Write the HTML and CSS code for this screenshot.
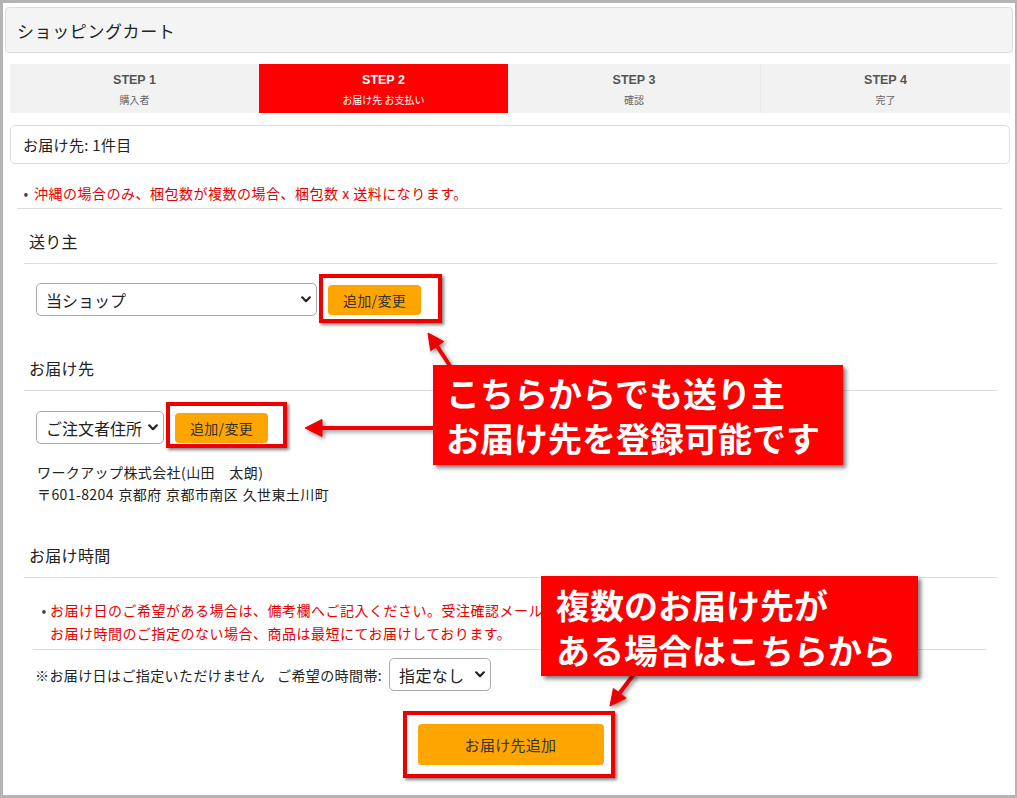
FILE: index.html
```html
<!DOCTYPE html>
<html lang="ja">
<head>
<meta charset="utf-8">
<title>ショッピングカート</title>
<link rel="stylesheet" href="styles.css">
</head>
<body>
<div class="page">
  <div class="frame">
    <div class="cart-head">ショッピングカート</div>

    <div class="steps">
      <div class="step"><div class="step-no">STEP 1</div><div class="step-name">購入者</div></div>
      <div class="step active"><div class="step-no">STEP 2</div><div class="step-name">お届け先 お支払い</div></div>
      <div class="step"><div class="step-no">STEP 3</div><div class="step-name">確認</div></div>
      <div class="step sep"><div class="step-no">STEP 4</div><div class="step-name">完了</div></div>
    </div>

    <div class="count-box">お届け先: 1件目</div>

    <ul class="note note-top">
      <li><span>沖縄の場合のみ、梱包数が複数の場合、梱包数 x 送料になります。</span></li>
    </ul>

    <section class="sec">
      <h2 class="sec-title">送り主</h2>
      <div class="row row-sender">
        <div class="select w-sender"><span>当ショップ</span><svg class="chev" width="10" height="7" viewBox="0 0 10 7"><path d="M1.2 1.3 L5 5.2 L8.8 1.3" fill="none" stroke="#222" stroke-width="2.2" stroke-linecap="round" stroke-linejoin="round"/></svg></div>
        <button class="btn-sm">追加/変更</button>
      </div>

      <h2 class="sec-title t-dest">お届け先</h2>
      <div class="row row-dest">
        <div class="select w-dest"><span>ご注文者住所</span><svg class="chev" width="10" height="7" viewBox="0 0 10 7"><path d="M1.2 1.3 L5 5.2 L8.8 1.3" fill="none" stroke="#222" stroke-width="2.2" stroke-linecap="round" stroke-linejoin="round"/></svg></div>
        <button class="btn-sm">追加/変更</button>
      </div>
      <div class="address">
        <div>ワークアップ株式会社(山田　太朗)</div>
        <div>〒601-8204 京都府 京都市南区 久世東土川町</div>
      </div>

      <h2 class="sec-title t-time">お届け時間</h2>
      <div class="time-body">
        <ul class="note note-time">
          <li><span>お届け日のご希望がある場合は、備考欄へご記入ください。受注確認メール<br>お届け時間のご指定のない場合、商品は最短にてお届けしております。</span></li>
        </ul>
        <div class="row row-time">
          <span>※お届け日はご指定いただけません</span>
          <span class="lbl">ご希望の時間帯:</span>
          <div class="select w-time"><span>指定なし</span><svg class="chev" width="10" height="7" viewBox="0 0 10 7"><path d="M1.2 1.3 L5 5.2 L8.8 1.3" fill="none" stroke="#222" stroke-width="2.2" stroke-linecap="round" stroke-linejoin="round"/></svg></div>
        </div>
      </div>
      <div class="add-wrap"><button class="btn-add">お届け先追加</button></div>
    </section>
  </div>

  <svg class="arrows" width="1017" height="798" viewBox="0 0 1017 798">
    <g fill="#ee0000" stroke="#ee0000">
      <line x1="452" y1="369" x2="437" y2="346" stroke-width="4"/>
      <polygon points="428,333 443.7,341.5 430.7,350.7" stroke-width="1"/>
      <line x1="440" y1="428" x2="319" y2="428" stroke-width="4"/>
      <polygon points="305,428 322,419.5 322,436.5" stroke-width="1"/>
      <line x1="634" y1="674" x2="619" y2="694" stroke-width="4"/>
      <polygon points="610,706 626.1,698.2 613.4,688.4" stroke-width="1"/>
    </g>
  </svg>

  <div class="mark m1"></div>
  <div class="mark m2"></div>
  <div class="mark m3"></div>

  <div class="callout c1">こちらからでも送り主<br>お届け先を登録可能です</div>
  <div class="callout c2">複数のお届け先が<br>ある場合はこちらから</div>
</div>
</body>
</html>
```

FILE: styles.css
```css
* { box-sizing: border-box; }

html, body {
  margin: 0;
  padding: 0;
  background: #fff;
}

body {
  font-family: "Noto Sans CJK JP", "Liberation Sans", sans-serif;
  color: #222;
}

.page {
  position: relative;
  width: 1017px;
  height: 798px;
  overflow: hidden;
}

.frame {
  height: 798px;
  border-style: solid;
  border-color: #b4b4b4;
  border-width: 3px 2px 3px 3px;
  padding: 4px 2px 0 2px;
  background: #fff;
}

.cart-head {
  height: 46px;
  border: 1px solid #dcdcdc;
  border-radius: 4px;
  background: #f4f4f4;
  padding-left: 11px;
  display: flex;
  align-items: center;
  font-size: 17px;
  letter-spacing: 0.6px;
  color: #222;
}

.steps {
  margin: 11px 3px 0 5px;
  height: 49px;
  display: grid;
  grid-template-columns: 249px 249px 252px 1fr;
  background: #f2f2f2;
}

.step {
  text-align: center;
  padding-top: 8px;
  color: #555;
}

.step.sep { border-left: 1px solid #e9e9e9; }

.step.active {
  background: #ff0000;
  color: #fff;
}

.step-no {
  font-family: "Liberation Sans", "Noto Sans CJK JP", sans-serif;
  font-weight: 700;
  font-size: 12.5px;
  line-height: 16px;
}

.step-name {
  font-size: 10px;
  line-height: 16px;
  margin-top: 4px;
  color: #666;
}

.step.active .step-name { color: #fff; }

.count-box {
  margin: 12px 3px 0 5px;
  height: 39px;
  border: 1px solid #dcdcdc;
  border-radius: 5px;
  padding-left: 12px;
  display: flex;
  align-items: center;
  font-size: 15px;
  letter-spacing: 0.3px;
  color: #222;
}

.note {
  list-style: none;
  margin: 0;
  padding: 0;
  color: #e80000;
  font-size: 14px;
  letter-spacing: 0.5px;
}

.note li {
  display: flex;
}

.note li::before {
  content: "•";
  color: #444;
  flex: none;
  text-align: center;
  letter-spacing: 0;
}

.note-top {
  margin: 19px 11px 0 12px;
  padding: 0 0 5px 1px;
  line-height: 20px;
  border-bottom: 1px solid #dcdcdc;
}

.note-top li::before { width: 16px; }

.sec {
  margin: 0 16px 0 19px;
}

.sec-title {
  margin: 20px 0 0 0;
  padding: 0 5px 10px;
  font-size: 16px;
  line-height: 24px;
  font-weight: 400;
  letter-spacing: 0.3px;
  color: #222;
  border-bottom: 1px solid #dcdcdc;
}

.t-dest { margin-top: 40px; }
.t-time { margin-top: 38px; }

.row {
  display: flex;
  align-items: center;
  padding-left: 12px;
}

.row-sender { margin-top: 19px; }
.row-dest { margin-top: 20px; }

.select {
  height: 33px;
  border: 1px solid #a8a8a8;
  border-radius: 5px;
  background: #fff;
  display: flex;
  align-items: center;
  justify-content: space-between;
  padding: 0 5px 0 9px;
  font-size: 16px;
  white-space: nowrap;
  color: #222;
}

.chev { flex: none; margin-left: 3px; }

.w-sender { width: 281px; }
.w-dest { width: 128px; }
.w-time { width: 102px; }

.btn-sm {
  margin-left: 11px;
  width: 93px;
  height: 30px;
  border: none;
  border-radius: 4px;
  background: #ffa500;
  color: #333;
  font-family: "Noto Sans CJK JP", sans-serif;
  font-size: 14px;
  letter-spacing: 0.3px;
  padding: 0;
}

.address {
  margin-top: 17px;
  padding-left: 13px;
  font-size: 14px;
  line-height: 22px;
  letter-spacing: 0.4px;
  word-spacing: 1px;
  color: #222;
}

.time-body {
  margin: 0 11px 0 9px;
}

.note-time {
  margin-top: 21px;
  padding: 0 0 4px 5px;
  line-height: 23px;
  border-bottom: 1px solid #dcdcdc;
}

.note-time li::before { width: 12px; }

.row-time {
  margin-top: 8px;
  padding-left: 2px;
  font-size: 14px;
  letter-spacing: 0.4px;
  color: #222;
}

.row-time .lbl { margin-left: 12px; }
.row-time .select { margin-left: 7px; letter-spacing: 0.3px; }

.add-wrap {
  margin-top: 33px;
  display: flex;
  justify-content: center;
}

.btn-add {
  width: 186px;
  height: 41px;
  border: none;
  border-radius: 4px;
  background: #ffa500;
  color: #333;
  font-family: "Noto Sans CJK JP", sans-serif;
  font-size: 15px;
  letter-spacing: 0.3px;
  padding: 0;
}

/* annotations */
.arrows {
  position: absolute;
  left: 0;
  top: 0;
  pointer-events: none;
  filter: drop-shadow(2px 2px 2px rgba(0, 0, 0, 0.45));
}

.mark {
  position: absolute;
  border: 4px solid #ee0000;
  box-shadow: 2px 2px 3px rgba(0, 0, 0, 0.5);
}

.m1 { left: 319px; top: 274px; width: 123px; height: 49px; }
.m2 { left: 166px; top: 402px; width: 121px; height: 46px; }
.m3 { left: 403px; top: 711px; width: 212px; height: 67px; }

.callout {
  position: absolute;
  background: #ff0000;
  color: #fff;
  font-weight: 700;
  font-size: 34px;
  line-height: 45px;
  letter-spacing: 0;
  box-shadow: 3px 3px 4px rgba(0, 0, 0, 0.5);
  white-space: nowrap;
}

.c1 { left: 433px; top: 365px; width: 410px; height: 100px; padding: 5px 0 0 13px; }
.c2 { left: 541px; top: 576px; width: 377px; height: 100px; padding: 6px 0 0 15px; }
```
